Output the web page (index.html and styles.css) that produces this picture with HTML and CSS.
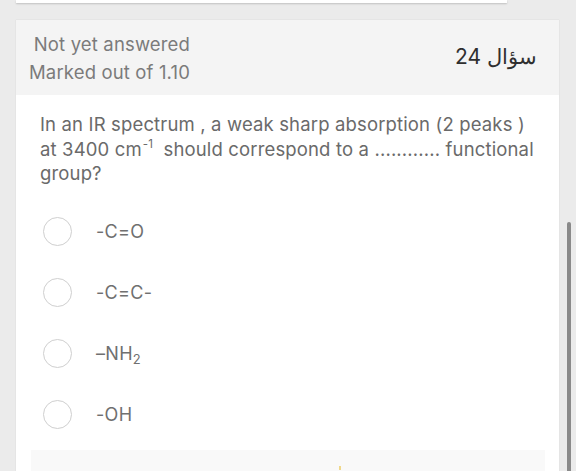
FILE: index.html
```html
<!DOCTYPE html>
<html lang="en">
<head>
<meta charset="utf-8">
<title>Question 24</title>
<link rel="stylesheet" href="styles.css">
</head>
<body>
<div class="prev-card"></div>
<div class="card">
  <div class="head">
    <div class="state">
      <div>Not yet answered</div>
      <div>Marked out of 1.10</div>
    </div>
    <div class="qno" dir="rtl">سؤال 24</div>
  </div>
  <div class="body">
    <p class="qtext">In an IR spectrum , a weak sharp absorption (2 peaks ) at 3400 cm<sup>-1</sup> should correspond to a ............ functional group?</p>
    <ul class="answers">
      <li class="opt"><span class="radio"></span><span class="lbl">-C=O</span></li>
      <li class="opt"><span class="radio"></span><span class="lbl">-C=C-</span></li>
      <li class="opt"><span class="radio"></span><span class="lbl">–NH<sub>2</sub></span></li>
      <li class="opt"><span class="radio"></span><span class="lbl">-OH</span></li>
    </ul>
    <div class="footer-box"><span class="spark"></span></div>
  </div>
</div>
<div class="scroll-track"><div class="scroll-thumb"></div></div>
</body>
</html>
```
FILE: styles.css
```css
html, body {
  margin: 0;
  padding: 0;
}
body {
  background: #ebebeb;
  font-family: Inter, "Liberation Sans", sans-serif;
  width: 576px;
  height: 471px;
  overflow: hidden;
  position: relative;
}
.prev-card {
  margin-left: 16px;
  width: 491px;
  height: 3px;
  background: #ffffff;
  box-shadow: 0 1px 2px rgba(0,0,0,0.18);
}
.card {
  margin: 17px 0 0 16px;
  width: 543px;
  background: #ffffff;
  box-shadow: 0 0 1px rgba(0,0,0,0.15);
}
.head {
  background: #f4f4f4;
  height: 75px;
  box-sizing: border-box;
  padding: 10px 22px 0 13px;
  display: flex;
  justify-content: space-between;
  align-items: flex-start;
}
.state {
  text-align: right;
  font-size: 18.5px;
  letter-spacing: 0.15px;
  line-height: 28px;
  color: #7b7b7b;
}
.qno {
  font-size: 21px;
  line-height: 28px;
  margin-top: 13px;
  color: #2f2f2f;
}
.body {
  padding: 17px 14px 0 15px;
}
.qtext {
  margin: 0 0 0 9px;
  font-size: 18.5px;
  letter-spacing: 0.15px;
  line-height: 24.5px;
  color: #6a6a6a;
  width: 500px;
}
.qtext sup {
  display: inline-block;
  font-size: 11.5px;
  line-height: 12px;
  vertical-align: top;
  margin: 1px 5px 0 1px;
}
.answers {
  list-style: none;
  margin: 15px 0 0 0;
  padding: 0;
}
.opt {
  height: 61px;
  display: flex;
  align-items: center;
  padding-left: 12px;
}
.radio {
  width: 27px;
  height: 27px;
  border: 1px solid #cfcfcf;
  border-radius: 50%;
  box-sizing: content-box;
  flex: none;
}
.lbl {
  margin-left: 24px;
  font-size: 18px;
  letter-spacing: 0.3px;
  color: #707070;
}
.lbl sub {
  font-size: 13px;
  line-height: 0;
  vertical-align: -4px;
}
.footer-box {
  margin-top: 5px;
  height: 40px;
  background: #f9f9f9;
  position: relative;
}
.spark {
  position: absolute;
  left: 308px;
  top: 16px;
  width: 2px;
  height: 4px;
  background: #f0d88a;
}
.scroll-track {
  position: absolute;
  left: 563px;
  top: 0;
  width: 13px;
  height: 471px;
}
.scroll-thumb {
  position: absolute;
  left: 4px;
  top: 222px;
  width: 4px;
  height: 260px;
  border-radius: 2px;
  background: #8a8a8a;
}
```
